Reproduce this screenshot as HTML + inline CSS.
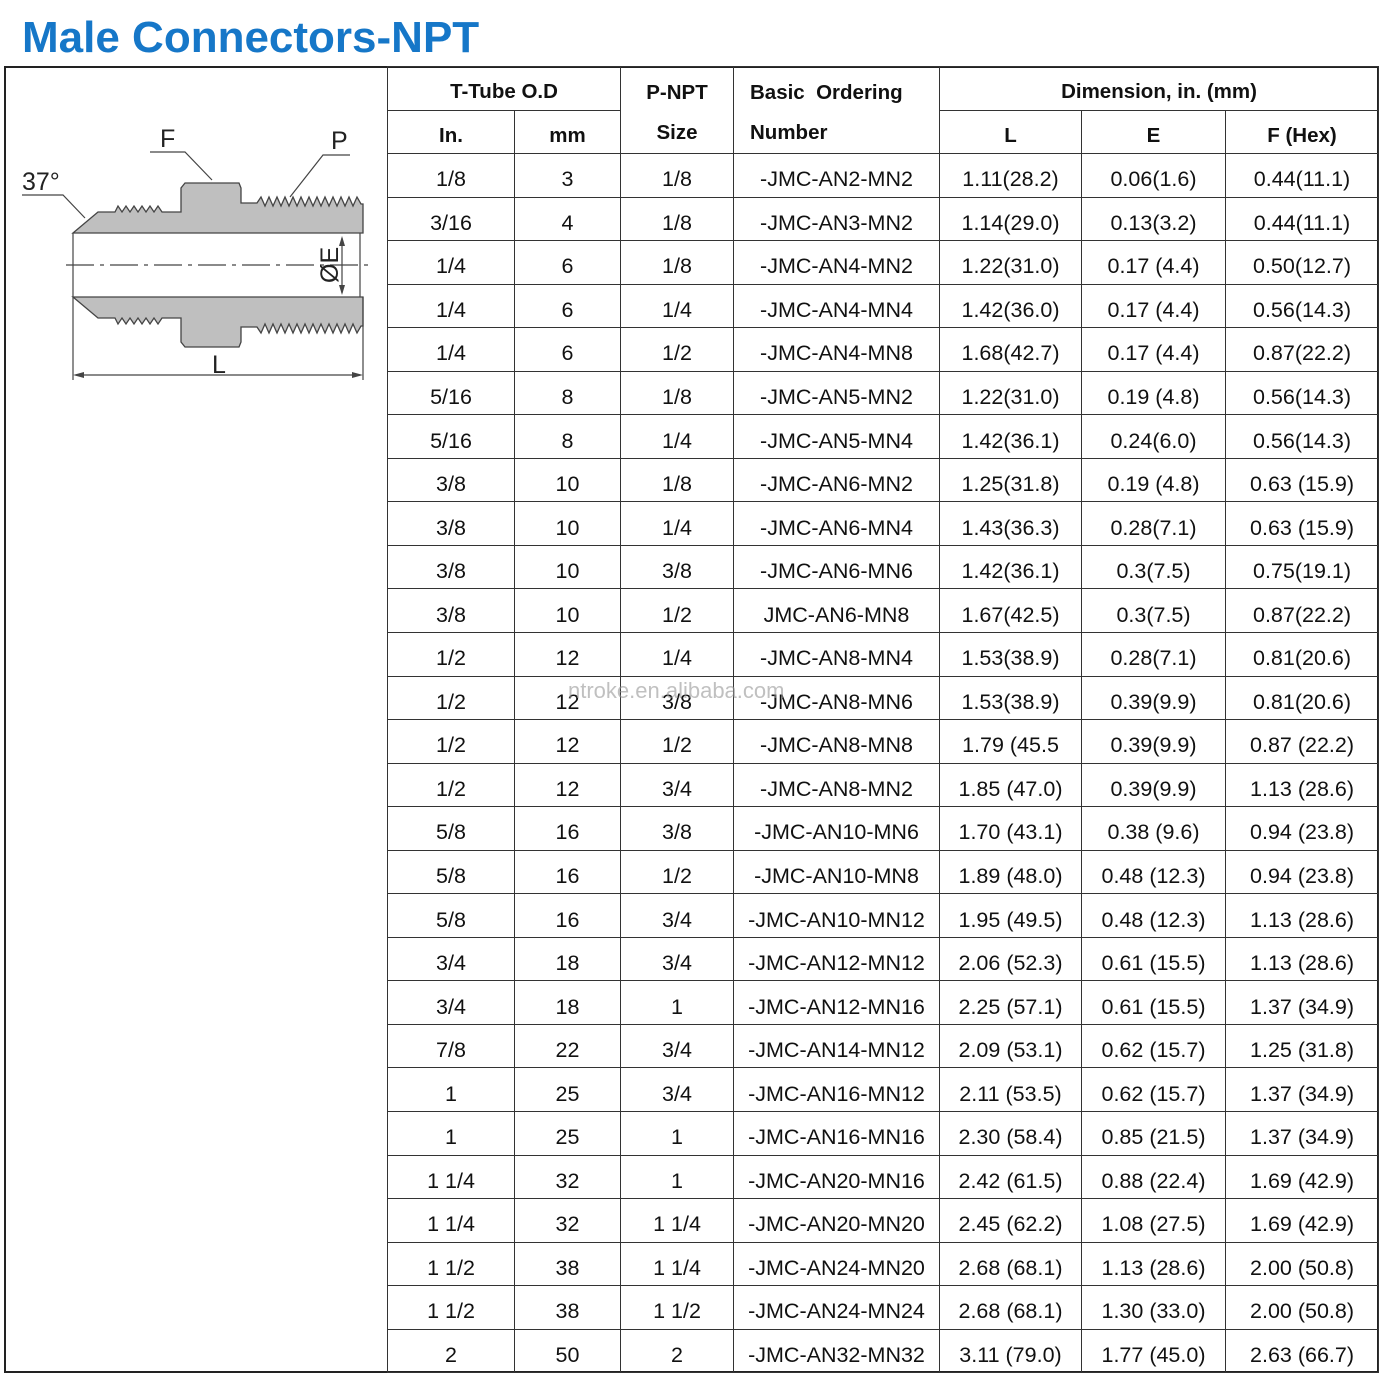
<!DOCTYPE html>
<html><head><meta charset="utf-8"><style>
*{margin:0;padding:0;box-sizing:border-box}
body{width:1383px;height:1379px;background:#fff;position:relative;overflow:hidden;font-family:"Liberation Sans",sans-serif;color:#111}
h1{position:absolute;left:22px;top:13px;font-size:44px;font-weight:bold;color:#1677c8;letter-spacing:0}
.frame{position:absolute;left:4px;top:66px;width:1375px;height:1307px;border:2px solid #222}
table{position:absolute;left:387px;top:66px;border-collapse:collapse;table-layout:fixed;width:991px}
tr{height:43.55px}
td{border:1.5px solid #333;text-align:center;font-size:21.5px;padding:8px 0 0 0;line-height:24px;white-space:nowrap;vertical-align:middle}
tr.h{height:43.5px}
tr.h td{font-weight:bold;font-size:20.5px}
td.l{text-align:left;padding-left:16px}
td.r2{line-height:40px;padding-top:6px}
</style></head><body>
<h1>Male Connectors-NPT</h1>
<div class="frame"></div>
<svg style="position:absolute;left:0;top:0" width="390" height="400">
<g fill="#bfbfbf" stroke="#444" stroke-width="1.3">
<path d="M73,233 L98,212 L115,212 L118,206 L122,212 L126,206 L130,212 L134,206 L138,212 L142,206 L146,212 L150,206 L154,212 L158,206 L162,212 L181,212 L181,188 L185,183 L239,183 L241,188 L241,203 L257,203 L261,197 L265,206 L269,197 L273,206 L277,197 L281,206 L285,197 L289,206 L293,197 L297,206 L301,197 L305,206 L309,197 L313,206 L317,197 L321,206 L325,197 L329,206 L333,197 L337,206 L341,197 L345,206 L349,197 L353,206 L357,197 L361,204 L363,204 L363,233 Z"/>
<path d="M73,297 L98,318 L115,318 L118,324 L122,318 L126,324 L130,318 L134,324 L138,318 L142,324 L146,318 L150,324 L154,318 L158,324 L162,318 L181,318 L181,342 L185,347 L239,347 L241,342 L241,327 L257,327 L261,333 L265,324 L269,333 L273,324 L277,333 L281,324 L285,333 L289,324 L293,333 L297,324 L301,333 L305,324 L309,333 L313,324 L317,333 L321,324 L325,333 L329,324 L333,333 L337,324 L341,333 L345,324 L349,333 L353,324 L357,333 L361,326 L363,326 L363,297 Z"/>
</g>
<g stroke="#444" stroke-width="1.2" fill="none">
<line x1="73" y1="233" x2="73" y2="297"/><line x1="360" y1="233" x2="360" y2="297"/>
<line x1="66" y1="265" x2="371" y2="265" stroke-dasharray="28,6,4,6"/>
<line x1="73" y1="297" x2="73" y2="380"/><line x1="363" y1="297" x2="363" y2="380"/>
<line x1="76" y1="375" x2="360" y2="375"/>
<path d="M22,195 L63,195 L85,218"/><path d="M150,152 L185,152 L212,180"/><path d="M350,155 L323,155 L290,197"/>
<line x1="342" y1="238" x2="342" y2="293"/>
</g>
<g fill="#444"><path d="M73,375 L84,372 L84,378Z"/><path d="M363,375 L352,372 L352,378Z"/><path d="M342,236 L339,246 L345,246Z"/><path d="M342,295 L339,285 L345,285Z"/></g>
<g font-family="Liberation Sans,sans-serif" font-size="25" fill="#222">
<text x="22" y="190">37°</text><text x="160" y="147">F</text><text x="331" y="149">P</text><text x="212" y="373">L</text>
<text transform="translate(338,283) rotate(-90)" font-size="25">ØE</text>
</g>
</svg>
<table>
<colgroup><col style="width:127px"><col style="width:106px"><col style="width:113px"><col style="width:206px"><col style="width:142px"><col style="width:144px"><col style="width:153px"></colgroup>
<tr class="h"><td colspan="2">T-Tube O.D</td><td rowspan="2" class="r2">P-NPT<br>Size</td><td rowspan="2" class="l r2">Basic&nbsp; Ordering<br>Number</td><td colspan="3">Dimension, in. (mm)</td></tr>
<tr class="h"><td>In.</td><td>mm</td><td>L</td><td>E</td><td>F (Hex)</td></tr>
<tr><td>1/8</td><td>3</td><td>1/8</td><td>-JMC-AN2-MN2</td><td>1.11(28.2)</td><td>0.06(1.6)</td><td>0.44(11.1)</td></tr>
<tr><td>3/16</td><td>4</td><td>1/8</td><td>-JMC-AN3-MN2</td><td>1.14(29.0)</td><td>0.13(3.2)</td><td>0.44(11.1)</td></tr>
<tr><td>1/4</td><td>6</td><td>1/8</td><td>-JMC-AN4-MN2</td><td>1.22(31.0)</td><td>0.17 (4.4)</td><td>0.50(12.7)</td></tr>
<tr><td>1/4</td><td>6</td><td>1/4</td><td>-JMC-AN4-MN4</td><td>1.42(36.0)</td><td>0.17 (4.4)</td><td>0.56(14.3)</td></tr>
<tr><td>1/4</td><td>6</td><td>1/2</td><td>-JMC-AN4-MN8</td><td>1.68(42.7)</td><td>0.17 (4.4)</td><td>0.87(22.2)</td></tr>
<tr><td>5/16</td><td>8</td><td>1/8</td><td>-JMC-AN5-MN2</td><td>1.22(31.0)</td><td>0.19 (4.8)</td><td>0.56(14.3)</td></tr>
<tr><td>5/16</td><td>8</td><td>1/4</td><td>-JMC-AN5-MN4</td><td>1.42(36.1)</td><td>0.24(6.0)</td><td>0.56(14.3)</td></tr>
<tr><td>3/8</td><td>10</td><td>1/8</td><td>-JMC-AN6-MN2</td><td>1.25(31.8)</td><td>0.19 (4.8)</td><td>0.63 (15.9)</td></tr>
<tr><td>3/8</td><td>10</td><td>1/4</td><td>-JMC-AN6-MN4</td><td>1.43(36.3)</td><td>0.28(7.1)</td><td>0.63 (15.9)</td></tr>
<tr><td>3/8</td><td>10</td><td>3/8</td><td>-JMC-AN6-MN6</td><td>1.42(36.1)</td><td>0.3(7.5)</td><td>0.75(19.1)</td></tr>
<tr><td>3/8</td><td>10</td><td>1/2</td><td>JMC-AN6-MN8</td><td>1.67(42.5)</td><td>0.3(7.5)</td><td>0.87(22.2)</td></tr>
<tr><td>1/2</td><td>12</td><td>1/4</td><td>-JMC-AN8-MN4</td><td>1.53(38.9)</td><td>0.28(7.1)</td><td>0.81(20.6)</td></tr>
<tr><td>1/2</td><td>12</td><td>3/8</td><td>-JMC-AN8-MN6</td><td>1.53(38.9)</td><td>0.39(9.9)</td><td>0.81(20.6)</td></tr>
<tr><td>1/2</td><td>12</td><td>1/2</td><td>-JMC-AN8-MN8</td><td>1.79 (45.5</td><td>0.39(9.9)</td><td>0.87 (22.2)</td></tr>
<tr><td>1/2</td><td>12</td><td>3/4</td><td>-JMC-AN8-MN2</td><td>1.85 (47.0)</td><td>0.39(9.9)</td><td>1.13 (28.6)</td></tr>
<tr><td>5/8</td><td>16</td><td>3/8</td><td>-JMC-AN10-MN6</td><td>1.70 (43.1)</td><td>0.38 (9.6)</td><td>0.94 (23.8)</td></tr>
<tr><td>5/8</td><td>16</td><td>1/2</td><td>-JMC-AN10-MN8</td><td>1.89 (48.0)</td><td>0.48 (12.3)</td><td>0.94 (23.8)</td></tr>
<tr><td>5/8</td><td>16</td><td>3/4</td><td>-JMC-AN10-MN12</td><td>1.95 (49.5)</td><td>0.48 (12.3)</td><td>1.13 (28.6)</td></tr>
<tr><td>3/4</td><td>18</td><td>3/4</td><td>-JMC-AN12-MN12</td><td>2.06 (52.3)</td><td>0.61 (15.5)</td><td>1.13 (28.6)</td></tr>
<tr><td>3/4</td><td>18</td><td>1</td><td>-JMC-AN12-MN16</td><td>2.25 (57.1)</td><td>0.61 (15.5)</td><td>1.37 (34.9)</td></tr>
<tr><td>7/8</td><td>22</td><td>3/4</td><td>-JMC-AN14-MN12</td><td>2.09 (53.1)</td><td>0.62 (15.7)</td><td>1.25 (31.8)</td></tr>
<tr><td>1</td><td>25</td><td>3/4</td><td>-JMC-AN16-MN12</td><td>2.11 (53.5)</td><td>0.62 (15.7)</td><td>1.37 (34.9)</td></tr>
<tr><td>1</td><td>25</td><td>1</td><td>-JMC-AN16-MN16</td><td>2.30 (58.4)</td><td>0.85 (21.5)</td><td>1.37 (34.9)</td></tr>
<tr><td>1 1/4</td><td>32</td><td>1</td><td>-JMC-AN20-MN16</td><td>2.42 (61.5)</td><td>0.88 (22.4)</td><td>1.69 (42.9)</td></tr>
<tr><td>1 1/4</td><td>32</td><td>1 1/4</td><td>-JMC-AN20-MN20</td><td>2.45 (62.2)</td><td>1.08 (27.5)</td><td>1.69 (42.9)</td></tr>
<tr><td>1 1/2</td><td>38</td><td>1 1/4</td><td>-JMC-AN24-MN20</td><td>2.68 (68.1)</td><td>1.13 (28.6)</td><td>2.00 (50.8)</td></tr>
<tr><td>1 1/2</td><td>38</td><td>1 1/2</td><td>-JMC-AN24-MN24</td><td>2.68 (68.1)</td><td>1.30 (33.0)</td><td>2.00 (50.8)</td></tr>
<tr><td>2</td><td>50</td><td>2</td><td>-JMC-AN32-MN32</td><td>3.11 (79.0)</td><td>1.77 (45.0)</td><td>2.63 (66.7)</td></tr>
</table>
<div style="position:absolute;left:568px;top:678px;font-size:22px;color:rgba(150,150,150,0.6)">ntroke.en.alibaba.com</div>
</body></html>
